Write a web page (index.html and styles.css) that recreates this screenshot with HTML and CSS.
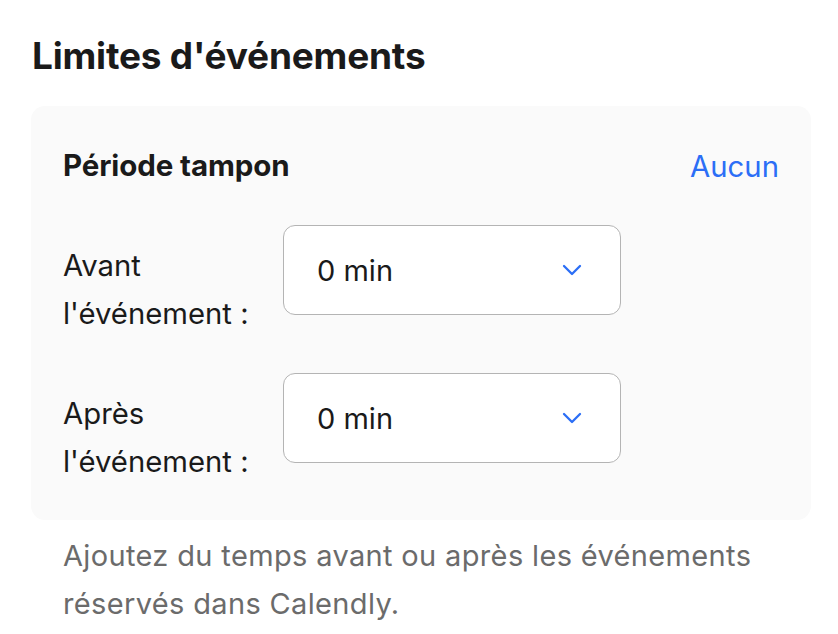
FILE: index.html
```html
<!DOCTYPE html>
<html lang="fr">
<head>
<meta charset="utf-8">
<link rel="stylesheet" href="styles.css">
</head>
<body>
<div class="page">
  <h1 class="title">Limites d'événements</h1>
  <div class="card">
    <div class="card-head">
      <span class="card-title">Période tampon</span>
      <a class="link">Aucun</a>
    </div>
    <div class="row">
      <div class="label">Avant<br>l'événement :</div>
      <div class="select">
        <span class="value">0 min</span>
        <svg class="chev" width="20" height="12" viewBox="0 0 20 12"><path d="M2 2 L10 10 L18 2" fill="none" stroke="#2b6ef6" stroke-width="2.3" stroke-linecap="round" stroke-linejoin="round"/></svg>
      </div>
    </div>
    <div class="row">
      <div class="label">Après<br>l'événement :</div>
      <div class="select">
        <span class="value">0 min</span>
        <svg class="chev" width="20" height="12" viewBox="0 0 20 12"><path d="M2 2 L10 10 L18 2" fill="none" stroke="#2b6ef6" stroke-width="2.3" stroke-linecap="round" stroke-linejoin="round"/></svg>
      </div>
    </div>
  </div>
  <p class="desc">Ajoutez du temps avant ou après les événements réservés dans Calendly.</p>
</div>
</body>
</html>
```
FILE: styles.css
```css
html, body {
  margin: 0;
  padding: 0;
  background: #ffffff;
}
body {
  font-family: "Inter", "Noto Sans", sans-serif;
  color: #1a1a1a;
}
.page {
  padding: 34px 27px 0 31px;
}
.title {
  margin: 0 0 28px 1px;
  font-size: 37px;
  font-weight: 700;
  line-height: 44px;
  color: #1a1a1a;
  letter-spacing: -0.2px;
}
.card {
  width: 780px;
  box-sizing: border-box;
  background: #fafafa;
  border-radius: 14px;
  padding: 41px 32px 34px 32px;
}
.card-head {
  display: flex;
  justify-content: space-between;
  align-items: center;
  height: 36px;
  margin-bottom: 42px;
}
.card-title {
  font-size: 29.5px;
  font-weight: 700;
  line-height: 36px;
  letter-spacing: -0.1px;
}
.link {
  font-size: 29.3px;
  line-height: 36px;
  color: #2b6ef6;
  margin-top: 3px;
}
.row {
  display: flex;
  align-items: flex-start;
}
.row + .row {
  margin-top: 35px;
}
.label {
  width: 220px;
  font-size: 29.3px;
  line-height: 48px;
  margin-top: 17px;
}
.select {
  width: 338px;
  height: 90px;
  box-sizing: border-box;
  border: 1.5px solid #b4b4b4;
  border-radius: 12px;
  background: #ffffff;
  display: flex;
  align-items: center;
  justify-content: space-between;
  padding: 0 38px 0 33px;
}
.value {
  font-size: 29px;
}
.chev {
  display: block;
}
.desc {
  margin: 12px 0 0 32px;
  font-size: 29px;
  line-height: 48px;
  color: #6b6b6b;
  width: 740px;
  letter-spacing: 0.35px;
}
```
